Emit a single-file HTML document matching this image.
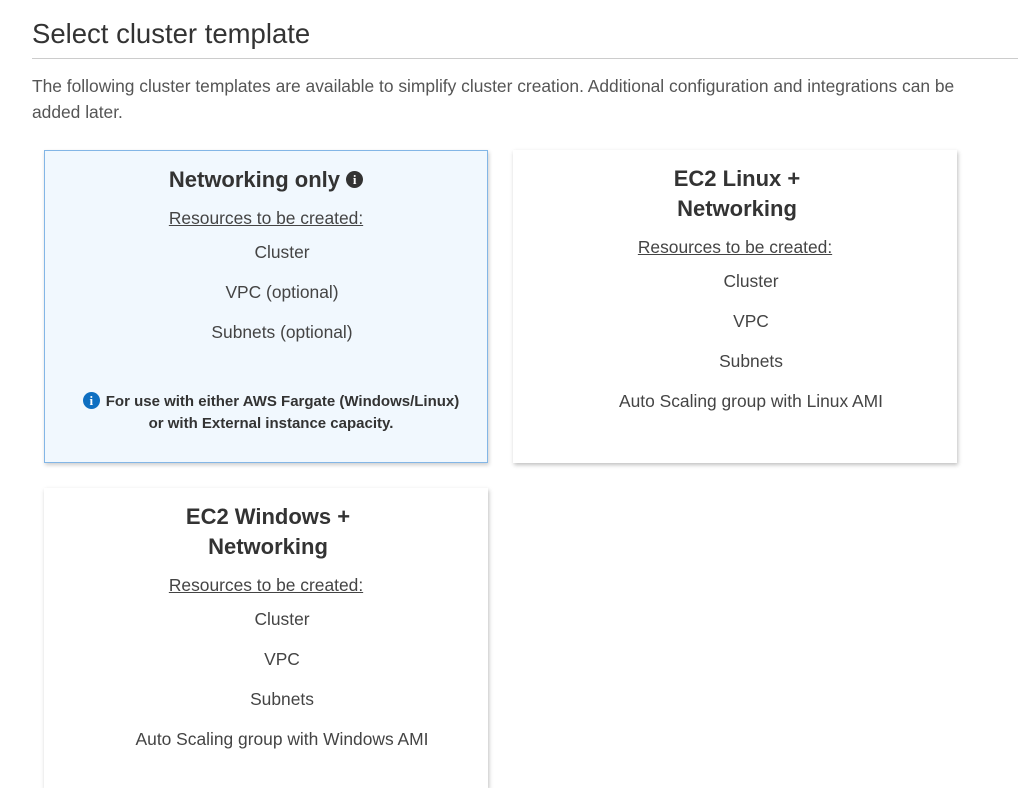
<!DOCTYPE html>
<html><head><style>
body{margin:0;background:#fff;font-family:"Liberation Sans",Arial,sans-serif;color:#444;width:1033px;height:751px;overflow:hidden;position:relative}
h1{position:absolute;left:32px;top:16px;margin:0;font-size:27.5px;font-weight:normal;color:#333;line-height:36px}
.hr{position:absolute;left:32px;top:58px;width:986px;height:1px;background:#ccc}
p.d{position:absolute;left:32px;top:73px;width:960px;margin:0;font-size:17.4px;line-height:26px;color:#555}
.card{position:absolute;width:444px;background:#fff;box-shadow:1px 2px 4px rgba(0,0,0,.25);text-align:center;box-sizing:border-box}
.sel{background:#f1f8fe;border:1px solid #83b6e6;box-shadow:1px 2px 4px rgba(0,0,0,.2)}
.t{font-size:22px;font-weight:bold;color:#333;line-height:30px;margin-top:14px}
.r{font-size:17.4px;text-decoration:underline;color:#444;margin-top:12px;line-height:22px}
.i{font-size:17.4px;color:#444;line-height:22px;margin-top:18px;padding-left:32px}
.r+.i{margin-top:12px}
.note{font-size:15px;font-weight:bold;color:#333;line-height:22px;margin-top:48px;padding-left:10px}
.ic{display:inline-block;width:17px;height:17px;border-radius:50%;color:#fff;font:bold 13px/17px "Liberation Serif",serif;text-align:center;vertical-align:middle}
</style></head><body>
<h1>Select cluster template</h1>
<div class="hr"></div>
<p class="d">The following cluster templates are available to simplify cluster creation. Additional configuration and integrations can be added later.</p>

<div class="card sel" style="left:44px;top:150px;height:313px">
<div class="t">Networking only <span class="ic" style="background:#333;position:relative;top:-2px">i</span></div>
<div class="r">Resources to be created:</div>
<div class="i">Cluster</div>
<div class="i">VPC (optional)</div>
<div class="i">Subnets (optional)</div>
<div class="note"><span class="ic" style="background:#0e6fc1;margin-right:6px;position:relative;top:-2px">i</span>For use with either AWS Fargate (Windows/Linux)<br>or with External instance capacity.</div>
</div>

<div class="card" style="left:513px;top:150px;height:313px">
<div class="t" style="margin-left:4px">EC2 Linux +<br>Networking</div>
<div class="r">Resources to be created:</div>
<div class="i">Cluster</div>
<div class="i">VPC</div>
<div class="i">Subnets</div>
<div class="i">Auto Scaling group with Linux AMI</div>
</div>

<div class="card" style="left:44px;top:488px;height:300px">
<div class="t" style="margin-left:4px">EC2 Windows +<br>Networking</div>
<div class="r">Resources to be created:</div>
<div class="i">Cluster</div>
<div class="i">VPC</div>
<div class="i">Subnets</div>
<div class="i">Auto Scaling group with Windows AMI</div>
</div>
</body></html>
